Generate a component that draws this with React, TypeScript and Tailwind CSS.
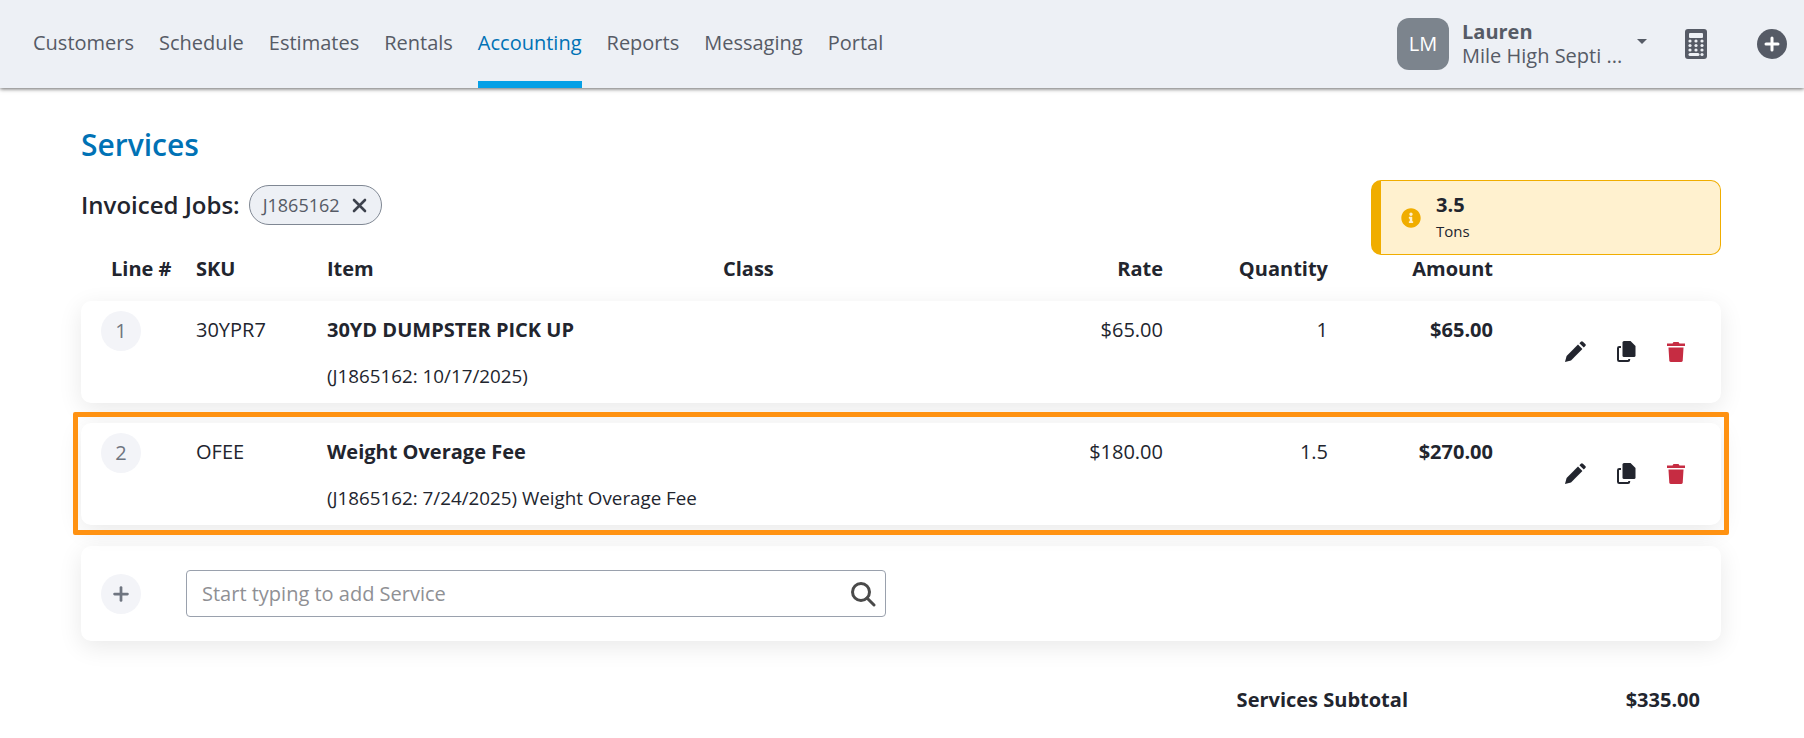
import React from "react";
import { FaInfoCircle } from "react-icons/fa";
import { FiPlus } from "react-icons/fi";

const navItems = ["Customers", "Schedule", "Estimates", "Rentals", "Accounting", "Reports", "Messaging", "Portal"];

const gridCols = "grid grid-cols-[115px_131px_396px_275px_165px_165px_165px_1fr]";

const rows = [
    {
        line: "1",
        sku: "30YPR7",
        item: "30YD DUMPSTER PICK UP",
        desc: "(J1865162: 10/17/2025)",
        rate: "$65.00",
        qty: "1",
        amount: "$65.00",
    },
    {
        line: "2",
        sku: "OFEE",
        item: "Weight Overage Fee",
        desc: "(J1865162: 7/24/2025) Weight Overage Fee",
        rate: "$180.00",
        qty: "1.5",
        amount: "$270.00",
    },
];

type Row = (typeof rows)[number];

const PencilIcon = () => (
    <svg width="21" height="21" viewBox="0 0 21 21" fill="#22252e">
        <path d="M0 21l1.6-6L13 3.6 17.4 8 6 19.4z" />
        <path d="M14.4 2.2l1.5-1.5q1-1 2 0l2.4 2.400q1 1 0 2L18.800 6.600z" />
    </svg>
);

const CopyIcon = () => (
    <svg width="19" height="21" viewBox="0 0 19 21">
        <path d="M7 0h6.500L18.500 5v9.500q0 1.500-1.500 1.500H7q-1.500 0-1.500-1.500v-13Q5.500 0 7 0z" fill="#22252e" />
        <path d="M4 6H2.200Q1 6 1 7.200V18.800Q1 20 2.200 20H11q1.200 0 1.200-1.200V18" fill="none" stroke="#22252e" strokeWidth="2" />
    </svg>
);

const TrashIcon = () => (
    <svg width="18" height="21" viewBox="0 0 18 21" fill="#c62c42">
        <path d="M0 2.500h5.500L6.500 1h5l1 1.500H18V5H0z" />
        <path d="M1.500 6.500h15l-.8 13Q15.600 21 14 21H4q-1.600 0-1.700-1.500z" />
    </svg>
);

const ServiceRow = ({ row }: { row: Row }) => (
    <div className={`${gridCols} h-[102px] rounded-[10px] bg-white pt-[10px] text-[20px] leading-[28px] text-[#22252e] shadow-[0_6px_24px_rgba(0,0,0,0.09)]`}>
        <div className="pl-[20px]">
            <div className="flex h-10 w-10 items-center justify-center rounded-full bg-[#f3f4f8] text-[#6f7580]">
                {row.line}
            </div>
        </div>
        <div className="pt-[5px]">{row.sku}</div>
        <div className="col-span-2 pt-[5px]">
            <div className="font-bold">{row.item}</div>
            <div className="mt-[18px] text-[18.8px]">{row.desc}</div>
        </div>
        <div className="pt-[5px] text-right">{row.rate}</div>
        <div className="pt-[5px] text-right">{row.qty}</div>
        <div className="pt-[5px] text-right font-bold">{row.amount}</div>
        <div className="flex items-start gap-[31px] pl-[72px] pt-[30px]">
            <PencilIcon />
            <CopyIcon />
            <TrashIcon />
        </div>
    </div>
);

const App = () => {
    return (
        <div className="h-[738px] overflow-hidden bg-white font-['Open_Sans',sans-serif]">
            <header className="relative flex h-[88px] items-stretch bg-[#edf0f5] pl-[33px] pr-[17px] shadow-[0_1px_4px_rgba(0,0,0,0.6)]">
                <nav className="flex gap-[25px] text-[20px]">
                    {navItems.map((item) => (
                        <a
                            key={item}
                            className={
                                item === "Accounting"
                                    ? "flex items-center border-b-[7px] border-[#06a0e6] pt-[5px] text-[#0072b5]"
                                    : "flex items-center border-b-[7px] border-transparent pt-[5px] text-[#565b66]"
                            }
                        >
                            {item}
                        </a>
                    ))}
                </nav>
                <div className="ml-auto flex items-center">
                    <div className="flex h-[52px] w-[52px] items-center justify-center rounded-[12px] bg-[#7c848d] text-[20px] text-white">
                        LM
                    </div>
                    <div className="ml-[13px] w-[162px] text-[#565b66]">
                        <div className="text-[20px] font-bold leading-[25px]">Lauren</div>
                        <div className="-mt-[1px] text-[20px] leading-[26px]">Mile High Septi ...</div>
                    </div>
                    <div className="mb-[5px] ml-[13px] h-0 w-0 border-x-[5px] border-t-[5px] border-x-transparent border-t-[#565b66]" />
                    <svg className="ml-[38px]" width="22" height="30" viewBox="0 0 22 30">
                        <rect width="22" height="30" rx="3" fill="#565b66" />
                        <rect x="4" y="4" width="14" height="5" rx="1" fill="#edf0f5" />
                        {[12, 16.5, 21].map((y) =>
                            [5, 11, 17].map((x) => <circle key={`${x}-${y}`} cx={x} cy={y} r="1.6" fill="#edf0f5" />)
                        )}
                        <rect x="3.5" y="24" width="11" height="3" rx="1.5" fill="#edf0f5" />
                        <circle cx="17" cy="25.5" r="1.6" fill="#edf0f5" />
                    </svg>
                    <svg className="ml-[50px]" width="30" height="30" viewBox="0 0 30 30">
                        <circle cx="15" cy="15" r="15" fill="#565b66" />
                        <path d="M15 9v12M9 15h12" stroke="#fff" strokeWidth="3" strokeLinecap="round" />
                    </svg>
                </div>
            </header>

            <main className="pl-[81px] pr-[83px]">
                <h1 className="pt-[36px] text-[30px] font-semibold leading-[42px] text-[#0072b5]">Services</h1>

                <div className="relative mt-[19px] flex h-[40px] items-center gap-[9px]">
                    <span className="text-[24px] font-semibold text-[#22252e]">Invoiced Jobs:</span>
                    <span className="flex h-[40px] w-[133px] items-center gap-[12px] rounded-[20px] border border-[#7f8793] bg-[#edf0f5] pl-[13px] text-[18px] text-[#565b66]">
                        J1865162
                        <svg width="15" height="15" viewBox="0 0 15 15" stroke="#3d424d" strokeWidth="2.6" strokeLinecap="round">
                            <path d="M2 2l11 11M13 2L2 13" />
                        </svg>
                    </span>
                    <div className="absolute right-0 top-[-5px] flex h-[75px] w-[350px] items-center rounded-[10px] border border-l-[10px] border-[#f0ad00] bg-[#fff1cf] pl-[20px] text-[#22252e]">
                        <FaInfoCircle className="text-[20px] text-[#f0ad00]" />
                        <div className="ml-[15px]">
                            <div className="-mt-[1px] text-[20px] font-bold leading-[26px]">3.5</div>
                            <div className="mt-[1px] text-[15px] leading-[24px]">Tons</div>
                        </div>
                    </div>
                </div>

                <div className={`${gridCols} mt-[29px] h-[28px] items-center text-[20px] font-bold text-[#22252e]`}>
                    <div className="pl-[30px]">Line #</div>
                    <div>SKU</div>
                    <div>Item</div>
                    <div>Class</div>
                    <div className="text-right">Rate</div>
                    <div className="text-right">Quantity</div>
                    <div className="text-right">Amount</div>
                </div>

                <div className="mt-[19px] flex flex-col gap-[20px]">
                    <ServiceRow row={rows[0]} />
                    <div className="relative mb-[1px]">
                        <ServiceRow row={rows[1]} />
                        {/* highlight frame sits over the row */}
                        <div className="absolute -inset-x-[8px] -bottom-[10px] -top-[11px] rounded-[2px] border-[5px] border-[#ff9212]" />
                    </div>
                    <div className="flex h-[95px] items-center rounded-[10px] bg-white pl-[20px] shadow-[0_6px_24px_rgba(0,0,0,0.09)]">
                        <div className="flex h-10 w-10 items-center justify-center rounded-full bg-[#f3f4f8] text-[#6f7580]">
                            <FiPlus className="text-[22px]" strokeWidth={3} />
                        </div>
                        <div className="ml-[45px] flex h-[47px] w-[700px] items-center justify-between rounded-[4px] border border-[#9aa1ad] pl-[15px] pr-[9px] text-[20px] text-[#8f9094]">
                            <span>Start typing to add Service</span>
                            <svg width="26" height="26" viewBox="0 0 26 26" fill="none" stroke="#4a4a4a" strokeWidth="3">
                                <circle cx="11" cy="11" r="8.5" />
                                <path d="M17 17l7 7" strokeLinecap="round" />
                            </svg>
                        </div>
                    </div>
                </div>

                <div className="mt-[45px] flex justify-end pr-[21px] text-[20px] font-bold leading-[28px] text-[#22252e]">
                    <span>Services Subtotal</span>
                    <span className="w-[292px] text-right">$335.00</span>
                </div>
            </main>
        </div>
    );
};

export default App;
